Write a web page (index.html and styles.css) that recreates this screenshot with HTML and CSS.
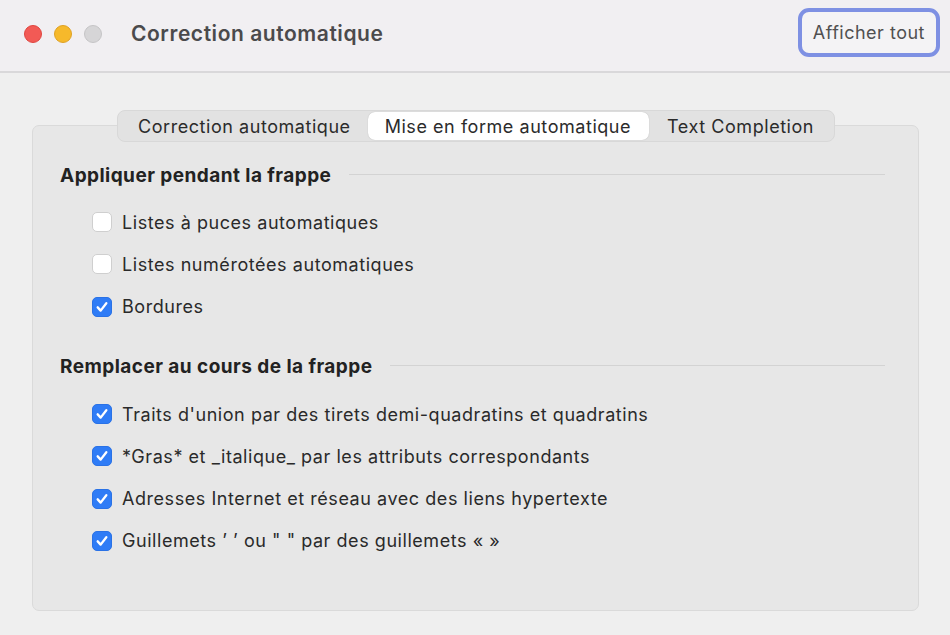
FILE: index.html
```html
<!DOCTYPE html>
<html lang="fr">
<head>
<meta charset="utf-8">
<title>Correction automatique</title>
<link rel="stylesheet" href="styles.css">
</head>
<body>
<div class="window">
  <header class="titlebar">
    <div class="lights">
      <span class="light red"></span>
      <span class="light yellow"></span>
      <span class="light grey"></span>
    </div>
    <h1 class="title">Correction automatique</h1>
    <button class="show-all">Afficher tout</button>
  </header>
  <main class="content">
    <div class="tabs">
      <span class="tab">Correction automatique</span>
      <span class="tab active">Mise en forme automatique</span>
      <span class="tab">Text Completion</span>
    </div>
    <section class="box">
      <div class="section-head"><span>Appliquer pendant la frappe</span><i class="rule"></i></div>
      <ul class="options">
        <li><span class="cb"></span>Listes à puces automatiques</li>
        <li><span class="cb"></span>Listes numérotées automatiques</li>
        <li><span class="cb on"><svg viewBox="0 0 20 20"><path d="M5.2 10.4l3.3 3.6 6.3-8.2"/></svg></span>Bordures</li>
      </ul>
      <div class="section-head second"><span>Remplacer au cours de la frappe</span><i class="rule"></i></div>
      <ul class="options">
        <li><span class="cb on"><svg viewBox="0 0 20 20"><path d="M5.2 10.4l3.3 3.6 6.3-8.2"/></svg></span>Traits d'union par des tirets demi-quadratins et quadratins</li>
        <li><span class="cb on"><svg viewBox="0 0 20 20"><path d="M5.2 10.4l3.3 3.6 6.3-8.2"/></svg></span>*Gras* et _italique_ par les attributs correspondants</li>
        <li><span class="cb on"><svg viewBox="0 0 20 20"><path d="M5.2 10.4l3.3 3.6 6.3-8.2"/></svg></span>Adresses Internet et réseau avec des liens hypertexte</li>
        <li><span class="cb on"><svg viewBox="0 0 20 20"><path d="M5.2 10.4l3.3 3.6 6.3-8.2"/></svg></span>Guillemets ’ ’ ou " " par des guillemets « »</li>
      </ul>
    </section>
  </main>
</div>
</body>
</html>
```
FILE: styles.css
```css
* { box-sizing: border-box; }
html, body { margin: 0; padding: 0; }
body {
  width: 950px;
  height: 635px;
  overflow: hidden;
  background: #efefef;
  font-family: Inter, "Open Sans", "Liberation Sans", sans-serif;
  color: #262626;
}
.window { width: 950px; height: 635px; display: flex; flex-direction: column; }
.titlebar {
  height: 73px;
  flex: none;
  background: #f1eff2;
  border-bottom: 2px solid #d9d8da;
  display: flex;
  align-items: center;
  padding: 0 10px 4px 24px;
}
.lights { display: flex; gap: 12px; }
.light { width: 18px; height: 18px; border-radius: 50%; display: block; }
.red { background: #f25a55; border: 1px solid #e0443f; }
.yellow { background: #f6b92b; border: 1px solid #dfa123; }
.grey { background: #d6d5d7; border: 1px solid #c5c4c6; }
.title {
  margin: 0 0 0 29px;
  font-size: 21px;
  font-weight: 600;
  color: #4b4a4c;
  letter-spacing: 0.55px;
}
.show-all {
  margin-left: auto;
  height: 49px;
  padding: 0 11px;
  font: inherit;
  font-size: 18px;
  letter-spacing: 0.5px;
  color: #505050;
  background: #f4f3f5;
  border: 4px solid #7e90e3;
  border-radius: 11px;
  margin-top: -2px;
}
.content {
  flex: 1;
  padding: 37px 31px 24px 32px;
  display: flex;
  flex-direction: column;
  position: relative;
}
.tabs {
  position: absolute;
  top: 37px;
  left: 117px;
  height: 32px;
  display: flex;
  background: #e2e2e2;
  border: 1px solid #d8d8d8;
  border-radius: 8px;
  padding: 1px;
  z-index: 2;
}
.tab {
  display: flex;
  align-items: center;
  padding: 0 18px 0 17px;
  font-size: 18px;
  letter-spacing: 0.55px;
  color: #2b2b2b;
  border-radius: 7px;
}
.tab:first-child { padding-left: 19px; padding-right: 17px; }
.tab:last-child { padding-left: 18px; padding-right: 19px; }
.tab.active { background: #ffffff; box-shadow: 0 0 1px rgba(0,0,0,0.25); }
.box {
  margin-top: 15px;
  flex: 1;
  background: #e7e7e7;
  border: 1px solid #dadada;
  border-radius: 7px;
  padding: 34px 33px 0 27px;
}
.section-head {
  display: flex;
  align-items: center;
  gap: 18px;
  font-size: 19px;
  letter-spacing: 0.45px;
  font-weight: 700;
  color: #222;
  height: 30px;
}
.section-head.second { margin-top: 24px; }
.rule { flex: 1; height: 1px; background: #d3d3d3; display: block; margin-top: -2px; }
.options { list-style: none; margin: 0; padding: 11px 0 0 32px; }
.options li {
  display: flex;
  align-items: center;
  height: 42.3px;
  font-size: 18px;
  letter-spacing: 0.55px;
  color: #2a2a2a;
}
.cb {
  width: 20px;
  height: 20px;
  border-radius: 5px;
  background: #fff;
  border: 1px solid #cfcfcf;
  margin-right: 10px;
  display: flex;
  align-items: center;
  justify-content: center;
  flex: none;
}
.cb.on { background: #2f7cf6; border-color: #2a72e6; }
.cb svg { width: 20px; height: 20px; fill: none; stroke: #fff; stroke-width: 2.6; stroke-linecap: round; stroke-linejoin: round; }
```
